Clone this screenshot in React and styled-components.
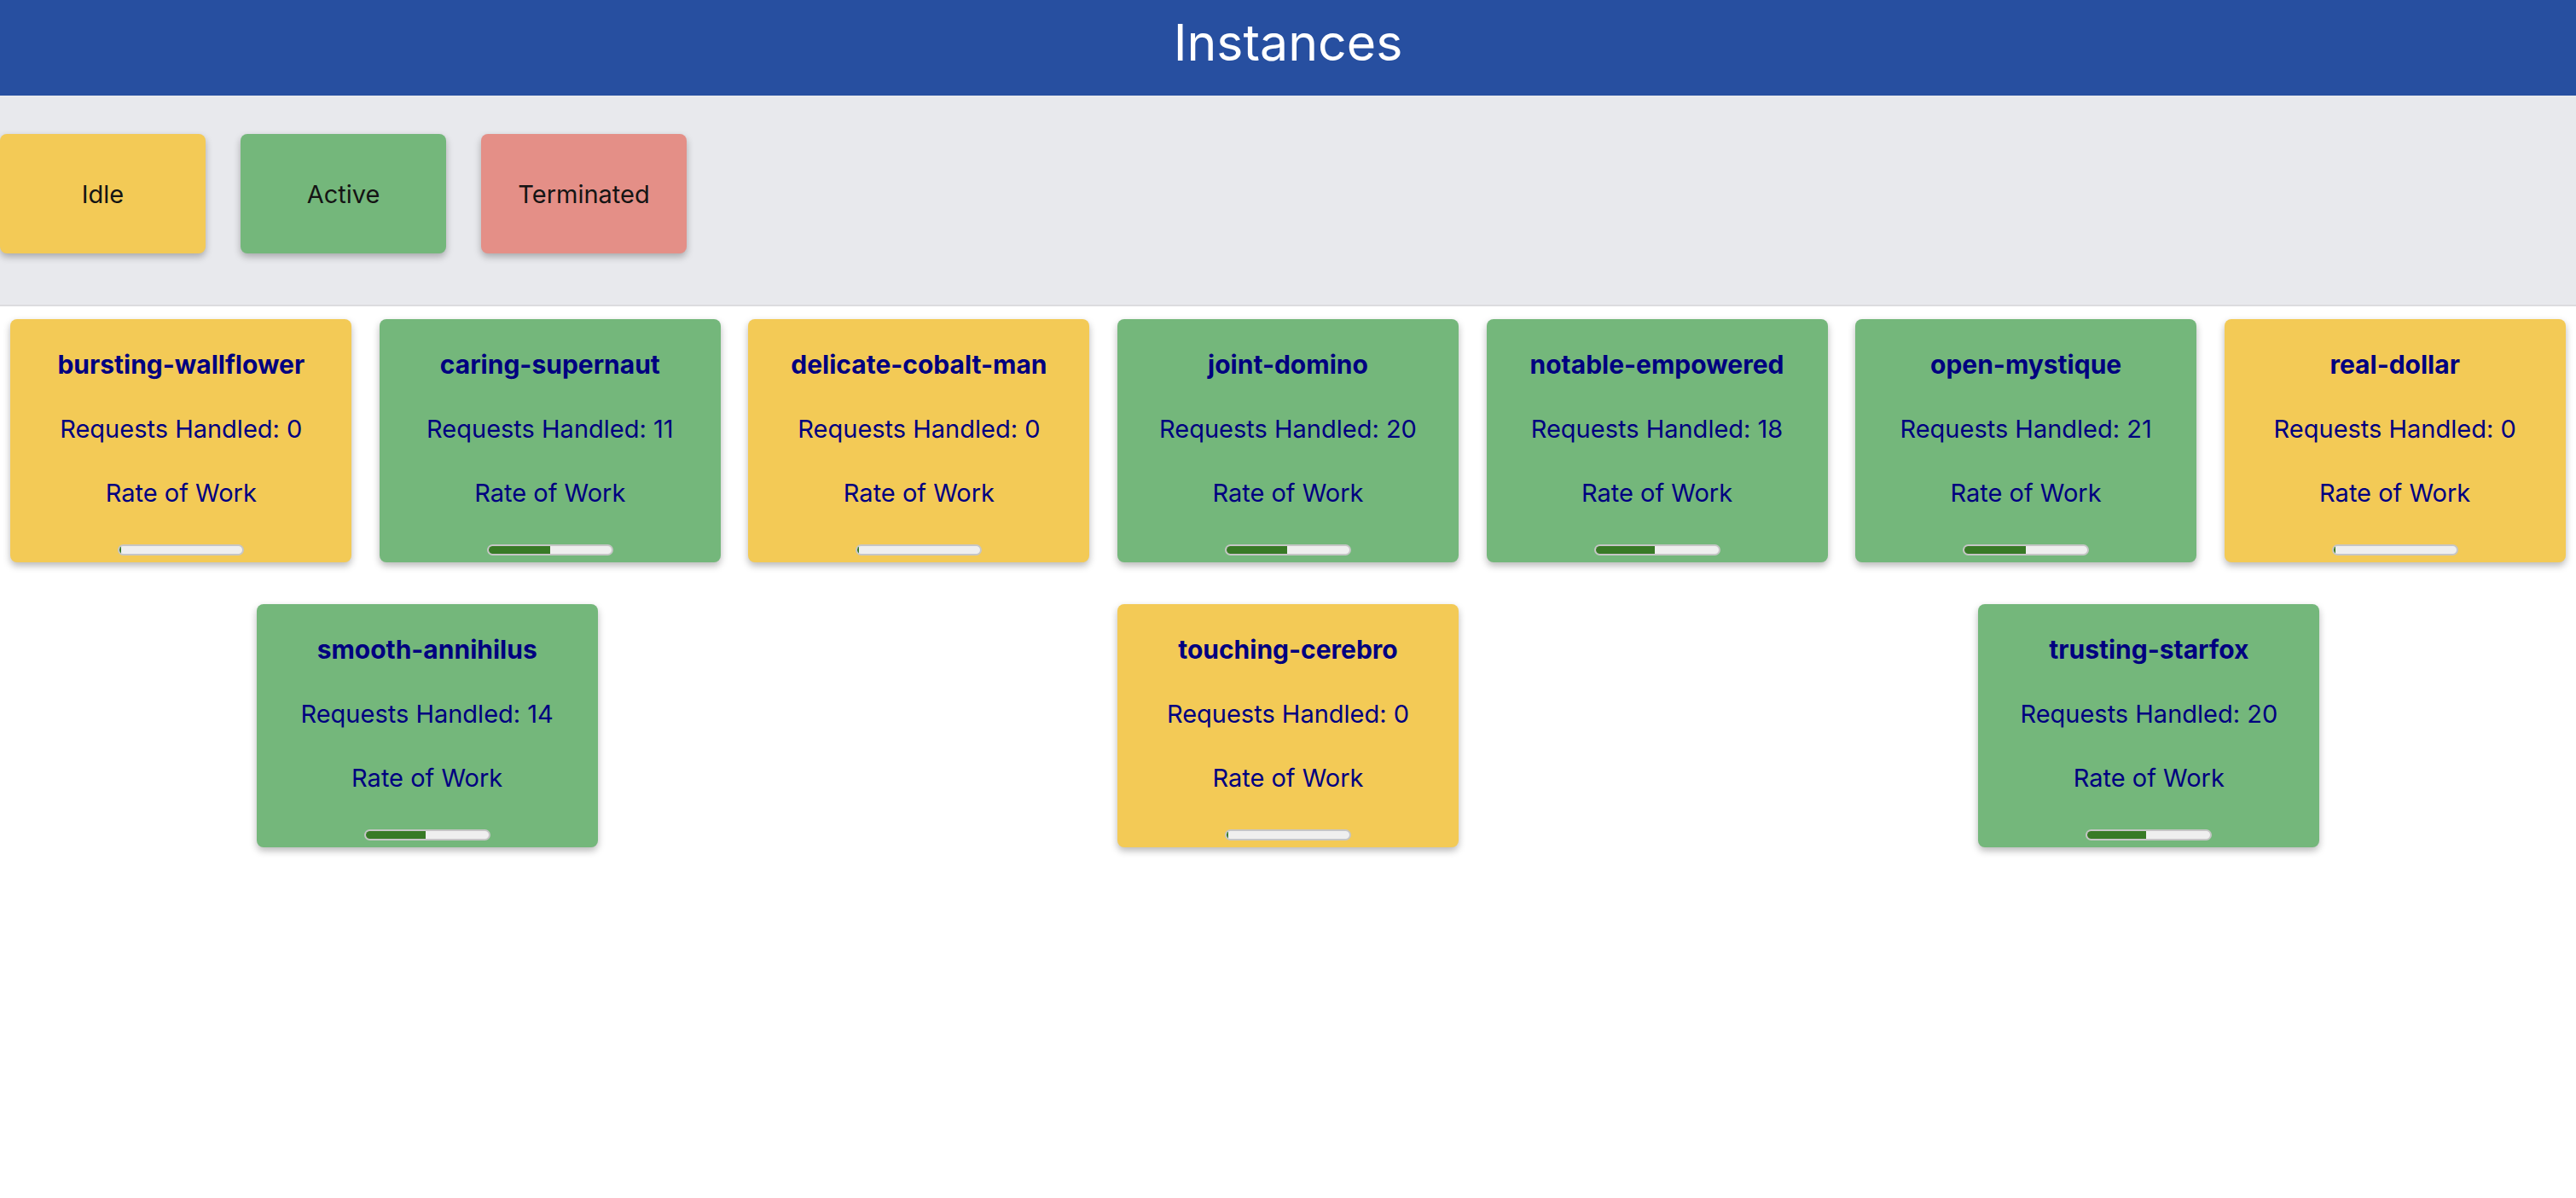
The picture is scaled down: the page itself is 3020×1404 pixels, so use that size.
import React from 'react'
import styled, { createGlobalStyle } from 'styled-components'

const GlobalStyle = createGlobalStyle`
  body {
    margin: 0;
    background: #ffffff;
    font-family: Inter, "Noto Sans", "Liberation Sans", sans-serif;
  }
`

const STATUS_COLORS = {
  idle: '#f3ca56',
  active: '#74b77b',
  terminated: '#e48f87',
}

const instances = [
  { name: 'bursting-wallflower', status: 'idle', requests: 0, rate: 0 },
  { name: 'caring-supernaut', status: 'active', requests: 11, rate: 50 },
  { name: 'delicate-cobalt-man', status: 'idle', requests: 0, rate: 0 },
  { name: 'joint-domino', status: 'active', requests: 20, rate: 49 },
  { name: 'notable-empowered', status: 'active', requests: 18, rate: 48 },
  { name: 'open-mystique', status: 'active', requests: 21, rate: 50 },
  { name: 'real-dollar', status: 'idle', requests: 0, rate: 0 },
  { name: 'smooth-annihilus', status: 'active', requests: 14, rate: 49 },
  { name: 'touching-cerebro', status: 'idle', requests: 0, rate: 0 },
  { name: 'trusting-starfox', status: 'active', requests: 20, rate: 48 },
]

const legend = [
  { label: 'Idle', status: 'idle' },
  { label: 'Active', status: 'active' },
  { label: 'Terminated', status: 'terminated' },
]

const Page = styled.div`
  min-height: 100vh;
  overflow: hidden;
`

const Header = styled.header`
  height: 112px;
  background: #274fa0;
  display: flex;
  justify-content: center;
`

const Title = styled.h1`
  margin: 0;
  padding-top: 6px;
  font-size: 59px;
  font-weight: 400;
  line-height: 88px;
  color: #ffffff;
`

const Legend = styled.section`
  display: flex;
  gap: 41px;
  padding: 45px 0 60px;
  background: #e8e9ed;
  border-bottom: 2px solid #dcdcdf;
`

const LegendItem = styled.div`
  width: 241px;
  height: 140px;
  display: flex;
  align-items: center;
  justify-content: center;
  border-radius: 8px;
  background: ${props => STATUS_COLORS[props.status]};
  box-shadow: 0 4px 8px rgba(0, 0, 0, 0.28);
  font-size: 29px;
  color: #141414;
`

const Grid = styled.section`
  display: flex;
  flex-wrap: wrap;
  justify-content: space-around;
  row-gap: 49px;
  margin: 15px -4px 0;
`

const Card = styled.div`
  width: 400px;
  box-sizing: border-box;
  padding: 16px 0 8px;
  display: flex;
  flex-direction: column;
  align-items: center;
  border-radius: 8px;
  background: ${props => STATUS_COLORS[props.status]};
  box-shadow: 0 4px 8px rgba(0, 0, 0, 0.28);
  color: #000080;
`

const Name = styled.div`
  font-size: 30px;
  font-weight: 700;
  line-height: 75px;
`

const Line = styled.div`
  font-size: 29px;
  line-height: 75px;
`

const Track = styled.div`
  width: 148px;
  height: 13px;
  margin-top: 23px;
  box-sizing: border-box;
  border: 2px solid #c6c6c6;
  border-radius: 8px;
  background: #efefef;
  overflow: hidden;
`

const Fill = styled.div`
  height: 100%;
  min-width: 2px;
  background: #387a26;
`

const InstanceCard = ({ instance }) => (
  <Card status={instance.status}>
    <Name>{instance.name}</Name>
    <Line>Requests Handled: {instance.requests}</Line>
    <Line>Rate of Work</Line>
    <Track>
      <Fill style={{ width: `${instance.rate}%` }} />
    </Track>
  </Card>
)

const App = () => {
  return (
    <Page>
      <GlobalStyle />
      <Header>
        <Title>Instances</Title>
      </Header>
      <Legend>
        {legend.map(item => (
          <LegendItem key={item.status} status={item.status}>
            {item.label}
          </LegendItem>
        ))}
      </Legend>
      <Grid>
        {instances.map(instance => (
          <InstanceCard key={instance.name} instance={instance} />
        ))}
      </Grid>
    </Page>
  )
}

export default App
